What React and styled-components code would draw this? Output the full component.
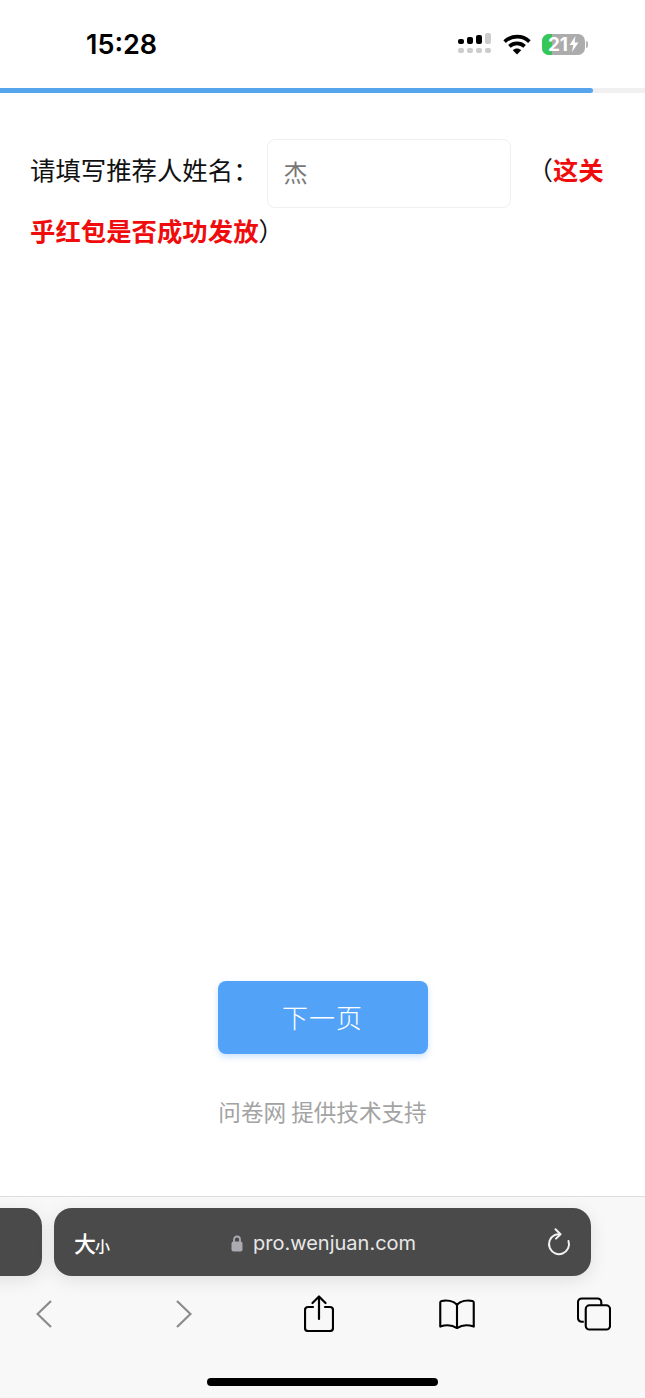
import React from 'react';
import styled, { createGlobalStyle } from 'styled-components';

const CJK = '"Noto Sans CJK SC", "Noto Sans", sans-serif';

const GlobalStyle = createGlobalStyle`
  html, body {
    margin: 0;
    padding: 0;
    background: #fff;
  }
  * {
    box-sizing: border-box;
  }
`;

const Page = styled.div`
  width: 645px;
  height: 1398px;
  display: flex;
  flex-direction: column;
  overflow: hidden;
  background: #fff;
  font-family: ${CJK};
`;

const StatusBar = styled.div`
  height: 88px;
  flex: none;
  display: flex;
  align-items: center;
  justify-content: space-between;
  padding: 0 57px 0 86px;
`;

const Clock = styled.div`
  font-family: Inter, "Liberation Sans", sans-serif;
  font-size: 27px;
  font-weight: 600;
  color: #000;
`;

const StatusIcons = styled.div`
  display: flex;
  align-items: center;
  gap: 11px;
`;

const Battery = styled.div`
  position: relative;
  width: 43px;
  height: 21px;
  border-radius: 7px;
  overflow: hidden;
  background: #acacac;
  display: flex;
  align-items: center;
  justify-content: center;
  gap: 1px;
  font-family: Inter, "Liberation Sans", sans-serif;
  font-size: 19px;
  font-weight: 700;
  color: #fff;
  span,
  svg {
    position: relative;
  }
  &::before {
    content: '';
    position: absolute;
    left: 0;
    top: 0;
    bottom: 0;
    width: 10px;
    background: #35c759;
  }
`;

const BatteryWrap = styled.div`
  display: flex;
  align-items: center;
  gap: 1px;
  &::after {
    content: '';
    width: 2px;
    height: 7px;
    border-radius: 0 2px 2px 0;
    background: #b4b4b4;
  }
`;

const ProgressTrack = styled.div`
  height: 5px;
  flex: none;
  background: #f0f0f0;
`;

const ProgressFill = styled.div`
  width: 593px;
  height: 100%;
  border-radius: 0 3px 3px 0;
  background: #56a4ec;
`;

const Question = styled.div`
  flex: 1;
  padding: 46px 31px 0 30px;
  font-size: 25.4px;
  line-height: 45px;
  color: #111;
`;

const NameInput = styled.span`
  display: inline-flex;
  align-items: center;
  vertical-align: middle;
  width: 244px;
  height: 69px;
  margin: 0 17px 0 8px;
  padding: 0 0 4px 16px;
  border: 1px solid #eeeff1;
  border-radius: 8px;
  color: #777;
  font-size: 24px;
  line-height: 1;
`;

const Highlight = styled.b`
  color: #f00c0c;
  font-weight: 700;
`;

const NextButton = styled.button`
  display: block;
  flex: none;
  width: 210px;
  height: 73px;
  margin: 0 auto;
  padding: 0 0 2px;
  border: 0;
  border-radius: 8px;
  background: #52a3f8;
  box-shadow: 0 3px 6px rgba(82, 163, 248, 0.3);
  color: #fff;
  font-family: ${CJK};
  font-size: 26px;
  font-weight: 300;
  letter-spacing: 1px;
`;

const Support = styled.div`
  flex: none;
  height: 142px;
  padding-top: 41px;
  text-align: center;
  font-size: 22.6px;
  line-height: 34px;
  font-weight: 400;
  color: #a3a3a3;
`;

const Toolbar = styled.div`
  flex: none;
  height: 202px;
  display: flex;
  flex-direction: column;
  border-top: 1px solid #dedede;
  background: #f8f8f8;
`;

const TabRow = styled.div`
  flex: none;
  display: flex;
  gap: 12px;
  padding-top: 11px;
  margin-left: -40px;
`;

const Tab = styled.div`
  height: 68px;
  flex: none;
  border-radius: 18px;
  background: #4a4a4a;
  box-shadow: 0 4px 18px rgba(0, 0, 0, 0.1);
`;

const SideTab = styled(Tab)`
  width: 82px;
`;

const AddressBar = styled(Tab)`
  position: relative;
  width: 537px;
  display: flex;
  align-items: center;
  justify-content: space-between;
  padding: 0 20px;
  color: #fff;
`;

const TextSize = styled.div`
  display: flex;
  align-items: baseline;
  font-size: 22px;
  font-weight: 500;
  line-height: 1;
  small {
    font-size: 15px;
    font-weight: 500;
    margin-left: -1px;
  }
`;

const Domain = styled.div`
  position: absolute;
  left: 177px;
  top: 1px;
  height: 100%;
  display: flex;
  align-items: center;
  gap: 10px;
  font-family: Inter, "Liberation Sans", sans-serif;
  font-size: 20px;
  color: #e8e8e8;
`;

const NavRow = styled.div`
  flex: none;
  display: grid;
  grid-template-columns: 140px 141px 129px 147px 127px;
  justify-items: center;
  align-items: center;
  height: 55px;
  margin: 10px 0 0 -26.5px;
`;

const HomeBar = styled.div`
  flex: none;
  width: 231px;
  height: 8px;
  margin: 37px auto 0;
  border-radius: 4px;
  background: #000;
`;

const Signal = () => (
  <svg width="34" height="22" viewBox="0 0 34 22">
    <rect x="0" y="6" width="6" height="5" rx="2" fill="#000" />
    <rect x="9" y="4" width="6" height="7" rx="2" fill="#000" />
    <rect x="18" y="2" width="6" height="9" rx="2" fill="#000" />
    <rect x="27" y="0" width="6" height="11" rx="2" fill="#ccc" />
    {[0, 9, 18, 27].map((x) => (
      <rect key={x} x={x} y="15" width="6" height="5" rx="2" fill="#ccc" />
    ))}
  </svg>
);

const Wifi = () => (
  <svg width="28" height="21" viewBox="0 0 28 21" fill="none" stroke="#000" strokeWidth="3.6">
    <path d="M1.6 7.6C8.5 1 19.5 1 26.4 7.6" />
    <path d="M6.4 12.4C10.6 8.4 17.4 8.4 21.6 12.4" />
    <path d="M14 20.5L9.8 16.2C12 14 16 14 18.2 16.2Z" fill="#000" stroke="none" />
  </svg>
);

const Bolt = () => (
  <svg width="10" height="16" viewBox="0 0 10 16">
    <path d="M6.5 0L0.5 9H4.2L3 16L9.5 6.5H5.6Z" fill="#fff" />
  </svg>
);

const Lock = () => (
  <svg width="12" height="17" viewBox="0 0 12 17">
    <path d="M3 7V4.5a3 3 0 0 1 6 0V7" fill="none" stroke="#aaaab0" strokeWidth="1.8" />
    <rect x="0.5" y="6.5" width="11" height="10" rx="2" fill="#aaaab0" />
  </svg>
);

const Reload = () => (
  <svg width="24" height="28" viewBox="0 0 24 28" fill="none" stroke="#f2f2f2" strokeWidth="2" strokeLinecap="round" strokeLinejoin="round">
    <path d="M21.5 13A10 10 0 1 1 7.5 7.2C9 6.5 10.5 6.2 12 6.2" />
    <path d="M8.5 1.2L13.5 6.2L9 10.6" />
  </svg>
);

const Back = () => (
  <svg width="16" height="28" viewBox="0 0 16 28" fill="none" stroke="#8a8a8a" strokeWidth="2.2">
    <path d="M15 1L1.5 14L15 27" />
  </svg>
);

const Forward = () => (
  <svg width="16" height="28" viewBox="0 0 16 28" fill="none" stroke="#8a8a8a" strokeWidth="2.2">
    <path d="M1 1L14.5 14L1 27" />
  </svg>
);

const Share = () => (
  <svg width="30" height="37" viewBox="0 0 30 37" fill="none" stroke="#000" strokeWidth="2.2" strokeLinejoin="round" strokeLinecap="round">
    <path d="M9 12H4a3 3 0 0 0-3 3v18a3 3 0 0 0 3 3h22a3 3 0 0 0 3-3V15a3 3 0 0 0-3-3h-5" />
    <path d="M15 24V2M8.5 8L15 1.5L21.5 8" />
  </svg>
);

const Book = () => (
  <svg width="36" height="30" viewBox="0 0 37 31" fill="none" stroke="#000" strokeWidth="2.2" strokeLinejoin="round">
    <path d="M18.5 6C15 2 8 1 2.5 2C1.6 2.2 1.2 2.8 1.2 3.6V28.5C7 26.5 14 27 18.5 30C23 27 30 26.5 35.8 28.5V3.6C35.8 2.8 35.4 2.2 34.5 2C29 1 22 2 18.5 6Z" />
    <path d="M18.5 6V29" />
  </svg>
);

const Tabs = () => (
  <svg width="34" height="34" viewBox="0 0 35 34" fill="none" stroke="#000" strokeWidth="2.2">
    <path d="M7 25H5a4 4 0 0 1-4-4V5a4 4 0 0 1 4-4h16a4 4 0 0 1 4 4v3" />
    <rect x="9" y="8" width="25" height="25" rx="4" />
  </svg>
);

export default function App() {
  return (
    <>
      <GlobalStyle />
      <Page>
        <StatusBar>
          <Clock>15:28</Clock>
          <StatusIcons>
            <Signal />
            <Wifi />
            <BatteryWrap>
              <Battery>
                <span>21</span>
                <Bolt />
              </Battery>
            </BatteryWrap>
          </StatusIcons>
        </StatusBar>
        <ProgressTrack>
          <ProgressFill />
        </ProgressTrack>
        <Question>
          请填写推荐人姓名：
          <NameInput>杰</NameInput>
          （<Highlight>这关乎红包是否成功发放</Highlight>）
        </Question>
        <NextButton>下一页</NextButton>
        <Support>问卷网 提供技术支持</Support>
        <Toolbar>
          <TabRow>
            <SideTab />
            <AddressBar>
              <TextSize>
                大<small>小</small>
              </TextSize>
              <Domain>
                <Lock />
                pro.wenjuan.com
              </Domain>
              <Reload />
            </AddressBar>
          </TabRow>
          <NavRow>
            <Back />
            <Forward />
            <Share />
            <Book />
            <Tabs />
          </NavRow>
          <HomeBar />
        </Toolbar>
      </Page>
    </>
  );
}
